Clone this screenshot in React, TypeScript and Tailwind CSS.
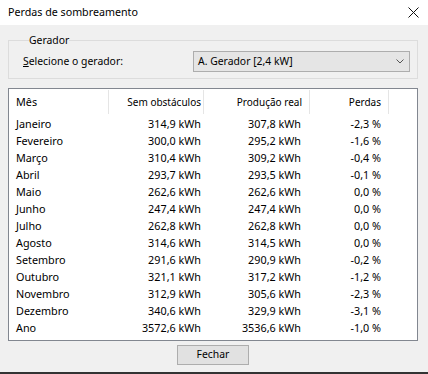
import * as React from 'react';

const rows: Array<[string, string, string, string]> = [
  ['Janeiro', '314,9 kWh', '307,8 kWh', '-2,3 %'],
  ['Fevereiro', '300,0 kWh', '295,2 kWh', '-1,6 %'],
  ['Março', '310,4 kWh', '309,2 kWh', '-0,4 %'],
  ['Abril', '293,7 kWh', '293,5 kWh', '-0,1 %'],
  ['Maio', '262,6 kWh', '262,6 kWh', '0,0 %'],
  ['Junho', '247,4 kWh', '247,4 kWh', '0,0 %'],
  ['Julho', '262,8 kWh', '262,8 kWh', '0,0 %'],
  ['Agosto', '314,6 kWh', '314,5 kWh', '0,0 %'],
  ['Setembro', '291,6 kWh', '290,9 kWh', '-0,2 %'],
  ['Outubro', '321,1 kWh', '317,2 kWh', '-1,2 %'],
  ['Novembro', '312,9 kWh', '305,6 kWh', '-2,3 %'],
  ['Dezembro', '340,6 kWh', '329,9 kWh', '-3,1 %'],
  ['Ano', '3572,6 kWh', '3536,6 kWh', '-1,0 %'],
];

export default function App() {
  return (
    <div className="w-[428px] h-[374px] flex flex-col bg-[#f0f0f0] text-[10.4px] text-black font-['Noto_Sans',sans-serif] overflow-hidden">
      {/* title bar */}
      <div className="h-[25px] bg-white flex items-center justify-between pl-[8px] pr-[9px] shrink-0 text-[10.7px]">
        <span>Perdas de sombreamento</span>
        <svg width="11" height="11" viewBox="0 0 11 11" className="text-[#111]">
          <path d="M0.5 0.5 L10.5 10.5 M10.5 0.5 L0.5 10.5" stroke="currentColor" strokeWidth="1" fill="none" />
        </svg>
      </div>

      <div className="flex-1 flex flex-col pl-[8px] pr-[10px] pt-[7px]">
        <fieldset className="border border-[#dcdcdc] pl-[14px] pr-[7px] pt-[3px] pb-[6px]">
          <legend className="ml-[6px] leading-[16px]">Gerador</legend>
          <div className="flex items-center justify-between">
            <span>
              <span className="underline">S</span>elecione o gerador:
            </span>
            <div className="w-[217px] h-[21px] border border-[#adadad] bg-[#e5e5e5] flex items-center justify-between pl-[4px] pr-[5px]">
              <span>A. Gerador [2,4 kW]</span>
              <svg width="8" height="5" viewBox="0 0 8 5">
                <path d="M0.5 0.5 L4 4 L7.5 0.5" stroke="#555" strokeWidth="1" fill="none" />
              </svg>
            </div>
          </div>
        </fieldset>

        <div className="mt-[9px] h-[253px] border border-[#828790] bg-white">
          <div className="grid grid-cols-[100px_95px_106px_79px] h-[27px] items-stretch text-[10px]">
            <div className="border-r border-[#e5e5e5] mt-[1px] mb-[2px] pl-[7px] flex items-center text-[10.8px]">Mês</div>
            <div className="border-r border-[#e5e5e5] mt-[1px] mb-[2px] pr-[2px] flex items-center justify-end">Sem obstáculos</div>
            <div className="border-r border-[#e5e5e5] mt-[1px] mb-[2px] pr-[7px] flex items-center justify-end">Produção real</div>
            <div className="border-r border-[#e5e5e5] mt-[1px] mb-[2px] pr-[7px] flex items-center justify-end">Perdas</div>
          </div>
          <div className="text-[10.8px]">
            {rows.map(([m, a, b, c]) => (
              <div key={m} className="grid grid-cols-[100px_95px_106px_79px] h-[17px] items-center">
                <div className="pl-[7px]">{m}</div>
                <div className="pr-[3px] text-right">{a}</div>
                <div className="pr-[9px] text-right">{b}</div>
                <div className="pr-[8px] text-right">{c}</div>
              </div>
            ))}
          </div>
        </div>

        <div className="flex justify-center mt-[4px]">
          <button className="w-[72px] h-[20px] border border-[#adadad] bg-[#e1e1e1] flex items-center justify-center">
            Fechar
          </button>
        </div>
      </div>
      <div className="h-[2px] bg-[#333] shrink-0" />
    </div>
  );
}
